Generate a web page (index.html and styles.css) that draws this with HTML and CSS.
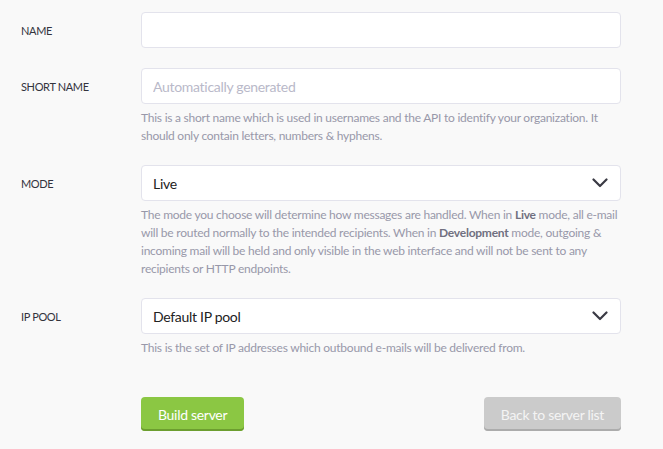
FILE: index.html
```html
<!DOCTYPE html>
<html>
<head>
<meta charset="utf-8">
<link rel="stylesheet" href="styles.css">
</head>
<body>
<form class="form">
  <div class="row">
    <label class="label">Name</label>
    <div class="field">
      <input class="input" type="text">
    </div>
  </div>
  <div class="row">
    <label class="label">Short name</label>
    <div class="field">
      <input class="input" type="text" placeholder="Automatically generated">
      <p class="help">This is a short name which is used in usernames and the API to identify your organization. It should only contain letters, numbers &amp; hyphens.</p>
    </div>
  </div>
  <div class="row">
    <label class="label">Mode</label>
    <div class="field">
      <div class="select"><span>Live</span>
        <svg class="chev" width="16" height="10" viewBox="0 0 16 10"><path d="M1.5 1.5 L8 8 L14.5 1.5" fill="none" stroke="#3a3a44" stroke-width="2.2" stroke-linecap="round" stroke-linejoin="round"/></svg>
      </div>
      <p class="help">The mode you choose will determine how messages are handled. When in <b>Live</b> mode, all e-mail will be routed normally to the intended recipients. When in <b>Development</b> mode, outgoing &amp; incoming mail will be held and only visible in the web interface and will not be sent to any recipients or HTTP endpoints.</p>
    </div>
  </div>
  <div class="row">
    <label class="label">IP Pool</label>
    <div class="field">
      <div class="select"><span>Default IP pool</span>
        <svg class="chev" width="16" height="10" viewBox="0 0 16 10"><path d="M1.5 1.5 L8 8 L14.5 1.5" fill="none" stroke="#3a3a44" stroke-width="2.2" stroke-linecap="round" stroke-linejoin="round"/></svg>
      </div>
      <p class="help">This is the set of IP addresses which outbound e-mails will be delivered from.</p>
    </div>
  </div>
  <div class="actions">
    <button type="button" class="btn btn-green">Build server</button>
    <button type="button" class="btn btn-grey">Back to server list</button>
  </div>
</form>
</body>
</html>
```
FILE: styles.css
```css
html, body {
  margin: 0;
  background: #f9f9f9;
  font-family: Lato, "Open Sans", sans-serif;
}
.form {
  padding: 12px 42px 0 21px;
}
.row {
  display: flex;
  margin-bottom: 20px;
}
.label {
  width: 120px;
  flex: none;
  height: 36px;
  display: flex;
  align-items: center;
  font-size: 11px;
  text-transform: uppercase;
  color: #33333d;
  letter-spacing: -0.35px;
}
.field {
  width: 480px;
}
.input, .select {
  box-sizing: border-box;
  width: 480px;
  height: 36px;
  margin: 0;
  border: 1px solid #e3e3ec;
  border-radius: 4px;
  background: #fff;
  font-family: inherit;
  font-size: 14px;
  letter-spacing: -0.3px;
  padding: 0 11px;
  color: #222;
  outline: none;
  display: block;
}
.input::placeholder {
  color: #b9b9c9;
}
.select {
  display: flex;
  align-items: center;
  justify-content: space-between;
  padding-right: 12px;
}
.chev {
  display: block;
}
.help {
  margin: 5px 0 0;
  font-size: 12px;
  letter-spacing: -0.24px;
  line-height: 18px;
  color: #9898a9;
}
.help b {
  color: #707080;
}
.actions {
  display: flex;
  justify-content: space-between;
  margin-left: 120px;
  padding-top: 20px;
}
.btn {
  height: 34px;
  border: none;
  border-radius: 4px;
  font-family: inherit;
  font-size: 14px;
  letter-spacing: -0.3px;
  color: #fff;
  padding: 0 17px;
}
.btn-green {
  background: #8bc743;
  box-shadow: inset 0 -2px 0 #6c9e2f;
}
.btn-grey {
  background: #cbcbcb;
  color: #f4f4f4;
  box-shadow: inset 0 -2px 0 #acacac;
}
```
